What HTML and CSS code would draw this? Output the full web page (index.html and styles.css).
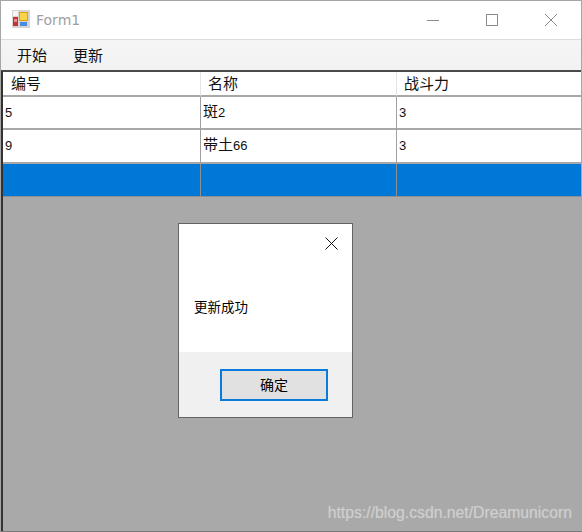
FILE: index.html
```html
<!DOCTYPE html>
<html lang="zh">
<head>
<meta charset="utf-8">
<title>Form1</title>
<link rel="stylesheet" href="styles.css">
</head>
<body>
<div class="window">
  <header class="titlebar">
    <svg class="app-icon" width="18" height="18" viewBox="0 0 18 18">
      <rect x="0" y="0" width="18" height="18" fill="#d4d4d4"/>
      <rect x="1" y="1" width="5" height="5" fill="#f4f4f4"/>
      <rect x="1" y="7" width="5" height="9" fill="#c8322a"/>
      <rect x="2" y="9" width="3" height="3" fill="#e88"/>
      <rect x="7" y="2" width="9" height="9" fill="#e0a000"/>
      <rect x="8" y="3" width="7" height="7" fill="#fbd34a"/>
      <rect x="8" y="12" width="7" height="4" fill="#4a8ae0"/>
    </svg>
    <span class="title">Form1</span>
    <div class="controls">
      <svg width="12" height="12" viewBox="0 0 12 12"><path d="M0 6.5H12" stroke="#8a8a8a" fill="none"/></svg>
      <svg width="12" height="12" viewBox="0 0 12 12"><rect x="0.5" y="0.5" width="11" height="11" stroke="#8a8a8a" fill="none"/></svg>
      <svg width="12" height="12" viewBox="0 0 12 12"><path d="M0 0L12 12M12 0L0 12" stroke="#8a8a8a" fill="none"/></svg>
    </div>
  </header>
  <nav class="menubar">
    <span class="menu-item">开始</span>
    <span class="menu-item">更新</span>
  </nav>
  <main class="client">
    <div class="grid">
      <div class="row head">
        <div class="cell">编号</div>
        <div class="cell">名称</div>
        <div class="cell">战斗力</div>
      </div>
      <div class="row data">
        <div class="cell">5</div>
        <div class="cell"><span class="cjk">斑</span>2</div>
        <div class="cell">3</div>
      </div>
      <div class="row data">
        <div class="cell">9</div>
        <div class="cell"><span class="cjk">带土</span>66</div>
        <div class="cell">3</div>
      </div>
      <div class="row data selected">
        <div class="cell"></div>
        <div class="cell"></div>
        <div class="cell"></div>
      </div>
    </div>
    <div class="dialog">
      <div class="dialog-body">
        <svg class="dialog-close" width="13" height="13" viewBox="0 0 13 13"><path d="M0.5 0.5L12.5 12.5M12.5 0.5L0.5 12.5" stroke="#111" fill="none"/></svg>
        <p class="message">更新成功</p>
      </div>
      <div class="dialog-foot">
        <button class="ok" type="button">确定</button>
      </div>
    </div>
    <span class="watermark">https://blog.csdn.net/Dreamunicorn</span>
  </main>
</div>
</body>
</html>
```
FILE: styles.css
```css
* { box-sizing: border-box; }
html, body { margin: 0; padding: 0; }
body {
  width: 582px;
  height: 532px;
  overflow: hidden;
  background: #fff;
  font-family: "Liberation Sans", "Noto Sans CJK SC", sans-serif;
  color: #111;
}
.window {
  width: 582px;
  height: 532px;
  display: flex;
  flex-direction: column;
  border: 1px solid #a6a6a6;
  border-bottom-color: #777;
  position: relative;
}
.titlebar {
  height: 38px;
  display: flex;
  align-items: center;
  padding-left: 11px;
  background: #fff;
  flex: none;
}
.app-icon { flex: none; margin-top: -2px; }
.title {
  margin-left: 6px;
  margin-top: -1px;
  font-family: "DejaVu Sans", sans-serif;
  font-size: 14px;
  color: #a0a0a0;
}
.controls {
  margin-left: auto;
  margin-right: 24px;
  display: flex;
  gap: 47px;
  align-items: center;
  margin-top: -1px;
}
.menubar {
  height: 31px;
  flex: none;
  display: flex;
  align-items: center;
  padding: 0 0 2px 16px;
  gap: 26px;
  background: linear-gradient(#f5f5f5, #f2f2f2);
  border-top: 1px solid #dcdcdc;
  font-size: 15px;
}
.client {
  flex: 1;
  background: #a9a9a9;
  border-top: 2px solid #4a4a4a;
  border-left: 2px solid #333;
  position: relative;
  display: flex;
  flex-direction: column;
}
.row {
  display: grid;
  grid-template-columns: 198px 196px 1fr;
}
.head { height: 25px; font-size: 15px; }
.head .cell {
  background: #fff;
  padding-left: 7px;
  line-height: 23px;
  border-right: 1px solid #e4e4e4;
  border-bottom: 2px solid #a8a8a8;
}
.head .cell:first-child { padding-left: 8px; }
.data { height: 33.4px; font-size: 13px; }
.data .cell {
  background: #fff;
  padding-left: 2px;
  height: 33.4px;
  line-height: 31.4px;
  border-right: 1px solid #a0a0a0;
  border-bottom: 2px solid #a8a8a8;
}
.cjk { font-size: 15px; line-height: 1; }
.data .cell:last-child, .head .cell:last-child { border-right: 0; }
.data.selected .cell { background: #0078d7; border-bottom: 1px solid #909090; }
.data.selected .cell:not(:last-child) { border-right-color: #909090; }
.dialog {
  position: absolute;
  left: 175px;
  top: 151px;
  width: 175px;
  height: 195px;
  border: 1px solid #646464;
  background: #f0f0f0;
  display: flex;
  flex-direction: column;
}
.dialog-body {
  height: 128px;
  background: #fff;
  position: relative;
  padding: 75px 0 0 15px;
}
.dialog-close { position: absolute; right: 14px; top: 13px; }
.message { margin: 0; font-size: 13.5px; line-height: 17px; color: #000; }
.dialog-foot {
  flex: 1;
  display: flex;
  align-items: flex-start;
  justify-content: flex-end;
  padding: 17px 24px 0 0;
}
.ok {
  width: 108px;
  height: 32px;
  padding: 0 0 3px;
  background: #e1e1e1;
  border: 2px solid #0a7bdc;
  font: 14px "Liberation Sans", "Noto Sans CJK SC", sans-serif;
  color: #000;
}
.watermark {
  position: absolute;
  right: 9px;
  bottom: 9px;
  font-size: 15.75px;
  color: #cfcfcf;
  text-shadow: 0 0 1px #bbb;
}
```
